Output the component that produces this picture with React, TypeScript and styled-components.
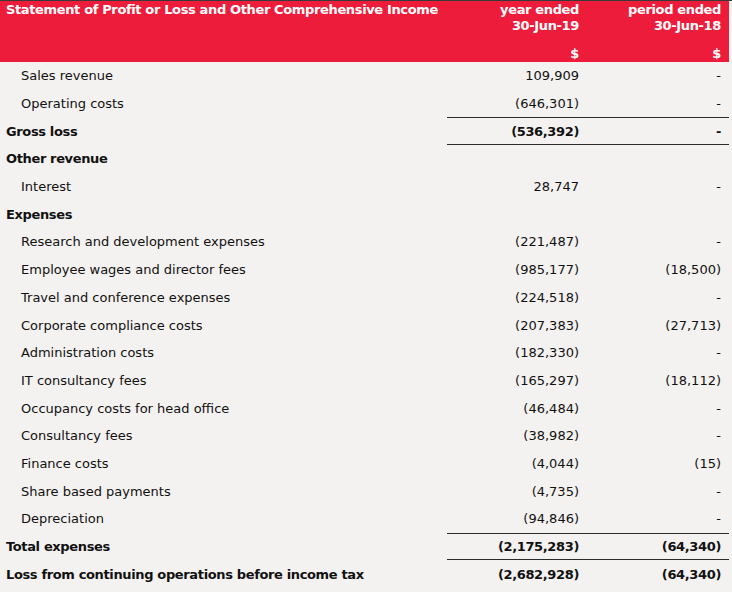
import React from "react";
import styled, { createGlobalStyle } from "styled-components";

const Global = createGlobalStyle`
  html, body { margin: 0; padding: 0; background: #f4f2f0; }
  body { font-family: "DejaVu Sans", Verdana, sans-serif; }
`;

const Page = styled.div`
  width: 732px;
  height: 592px;
  background: #f4f2f0;
  border-top: 1px solid #3a3a3a;
  box-sizing: border-box;
  overflow: hidden;
`;

const Table = styled.div`
  width: 729px;
  display: flex;
  flex-direction: column;
`;

const Header = styled.div`
  display: grid;
  grid-template-columns: 447px 140px 142px;
  height: 61px;
  background: #ee1c3b;
  color: #ffffff;
  font-weight: bold;
  font-size: 13px;
  letter-spacing: -0.36px;
  line-height: 16px;
`;

const Title = styled.div`
  padding: 1px 0 0 6px;
`;

const HeadCol = styled.div`
  display: flex;
  flex-direction: column;
  justify-content: space-between;
  align-items: flex-end;
  padding: 1px 8px 0 0;
  text-align: right;
`;

const Row = styled.div<{ $bold?: boolean }>`
  display: grid;
  grid-template-columns: 447px 140px 142px;
  height: 27.7px;
  color: #111111;
  font-size: 13px;
  font-weight: ${(p) => (p.$bold ? "bold" : "normal")};
  letter-spacing: ${(p) => (p.$bold ? "-0.36px" : "0")};
`;

const Label = styled.div<{ $indent?: boolean }>`
  display: flex;
  align-items: center;
  padding-left: ${(p) => (p.$indent ? "21px" : "6px")};
  white-space: nowrap;
`;

const Value = styled.div<{ $rule?: boolean }>`
  display: flex;
  align-items: center;
  justify-content: flex-end;
  padding-right: 8px;
  box-sizing: border-box;
  border-top: 1px solid ${(p) => (p.$rule ? "#2a2a2a" : "transparent")};
  border-bottom: 1px solid ${(p) => (p.$rule ? "#2a2a2a" : "transparent")};
  white-space: nowrap;
`;

type Line = {
  label: string;
  a?: string;
  b?: string;
  bold?: boolean;
  rule?: boolean;
};

const lines: Line[] = [
  { label: "Sales revenue", a: "109,909", b: "-" },
  { label: "Operating costs", a: "(646,301)", b: "-" },
  { label: "Gross loss", a: "(536,392)", b: "-", bold: true, rule: true },
  { label: "Other revenue", bold: true },
  { label: "Interest", a: "28,747", b: "-" },
  { label: "Expenses", bold: true },
  { label: "Research and development expenses", a: "(221,487)", b: "-" },
  { label: "Employee wages and director fees", a: "(985,177)", b: "(18,500)" },
  { label: "Travel and conference expenses", a: "(224,518)", b: "-" },
  { label: "Corporate compliance costs", a: "(207,383)", b: "(27,713)" },
  { label: "Administration costs", a: "(182,330)", b: "-" },
  { label: "IT consultancy fees", a: "(165,297)", b: "(18,112)" },
  { label: "Occupancy costs for head office", a: "(46,484)", b: "-" },
  { label: "Consultancy fees", a: "(38,982)", b: "-" },
  { label: "Finance costs", a: "(4,044)", b: "(15)" },
  { label: "Share based payments", a: "(4,735)", b: "-" },
  { label: "Depreciation", a: "(94,846)", b: "-" },
  { label: "Total expenses", a: "(2,175,283)", b: "(64,340)", bold: true, rule: true },
  { label: "Loss from continuing operations before income tax", a: "(2,682,928)", b: "(64,340)", bold: true },
];

export default function App() {
  return (
    <>
      <Global />
      <Page>
        <Table>
          <Header>
            <Title>Statement of Profit or Loss and Other Comprehensive Income</Title>
            <HeadCol>
              <div>
                year ended
                <br />
                30-Jun-19
              </div>
              <div>$</div>
            </HeadCol>
            <HeadCol>
              <div>
                period ended
                <br />
                30-Jun-18
              </div>
              <div>$</div>
            </HeadCol>
          </Header>
          {lines.map((l, i) => (
            <Row key={i} $bold={l.bold}>
              <Label $indent={!l.bold}>{l.label}</Label>
              <Value $rule={l.rule}>{l.a ?? ""}</Value>
              <Value $rule={l.rule}>{l.b ?? ""}</Value>
            </Row>
          ))}
        </Table>
      </Page>
    </>
  );
}
